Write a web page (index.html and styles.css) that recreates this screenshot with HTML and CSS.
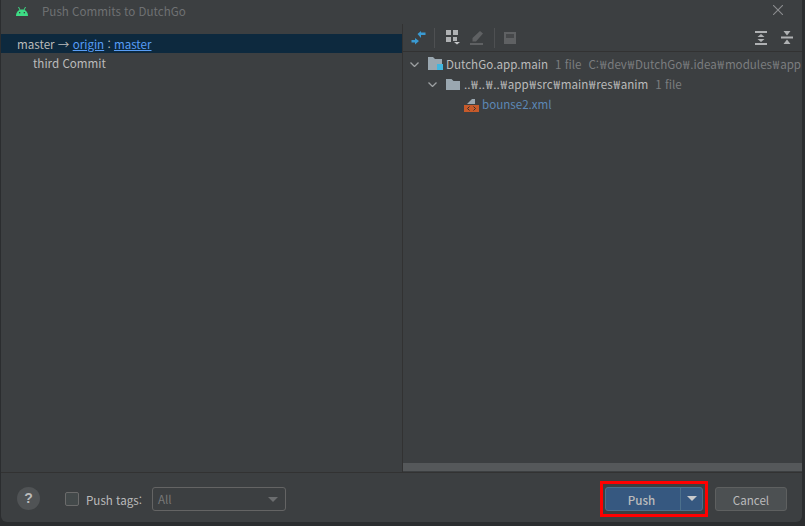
FILE: index.html
```
<!DOCTYPE html>
<html lang="ko">
<head>
<meta charset="utf-8">
<title>Push Commits to DutchGo</title>
<link rel="stylesheet" href="styles.css">
</head>
<body>
<div class="window">
  <header class="titlebar">
    <svg class="android" width="12" height="9" viewBox="0 0 12 9"><path fill="#3ddc84" d="M0 9C0 5 2.500 2.500 6 2.500S12 5 12 9z"/><path stroke="#3ddc84" stroke-width="1" d="M2.500 0l1.500 3M9.500 0L8 3"/><rect x="3" y="5" width="1.300" height="1.300" fill="#3c3f41"/><rect x="7.700" y="5" width="1.300" height="1.300" fill="#3c3f41"/></svg>
    <span class="title">Push Commits to DutchGo</span>
    <svg class="close" width="10" height="10" viewBox="0 0 10 10"><path stroke="#8a8c8e" stroke-width="1.100" fill="none" d="M0 0l10 10M10 0L0 10"/></svg>
  </header>
  <main class="split">
    <section class="left">
      <div class="branch"><span>master</span> <span class="arrow">→</span> <a>origin</a> <span>:</span> <a>master</a></div>
      <div class="commit">third Commit</div>
    </section>
    <section class="right">
      <div class="toolbar">
        <svg class="t-diff" width="15" height="14" viewBox="0 0 15 14"><path fill="#3a9ad2" d="M10 1.500h4.500V4H10zM10 0v7L6.500 3zM.5 9H4v2.500H.5zM4 7v6.500L8 10z"/></svg>
        <i class="sep"></i>
        <svg class="t-group" width="16" height="15" viewBox="0 0 16 15"><path fill="#afb1b3" d="M1 0h5v5H1zM8 0h5v5H8zM1 7h5v5H1zM8 7h4v4H8z"/><path fill="#c4c6c8" d="M9 12h6l-3 2.500z"/></svg>
        <svg class="t-edit" width="14" height="14" viewBox="0 0 14 14"><path fill="#5f6163" d="M10 0l3 2.500L6 10.500H2.500V7zM0 12h13v2H0z"/></svg>
        <i class="sep"></i>
        <svg class="t-save" width="12" height="12" viewBox="0 0 12 12"><path fill="#5f6163" d="M0 0h12v12H0z"/><path fill="#46484a" d="M2 2h8v4H2z"/></svg>
        <span class="spacer"></span>
        <svg width="12" height="14" viewBox="0 0 12 14"><path fill="#afb1b3" d="M0 0h12v2H0zM0 12h12v2H0zM6 3l3.500 3h-7zM6 11L2.500 8h7z"/></svg>
        <svg class="t-last" width="12" height="13" viewBox="0 0 12 13"><path fill="#afb1b3" d="M0 5.500h12v2H0zM6 4.500L2.500 0h7zM6 8.500l3.500 4.500h-7z"/></svg>
      </div>
      <div class="tree">
        <div class="row l0">
          <svg class="chev" width="9" height="5" viewBox="0 0 9 5"><path stroke="#9da0a2" stroke-width="1.300" fill="none" d="M.5.500l4 4 4-4"/></svg>
          <svg class="ico" width="16" height="14" viewBox="0 0 16 14"><path fill="#9aa7b0" d="M0 0h5l2 2h7v5H9v6H0z"/><path fill="#40b6e0" d="M9 7h6v6H9z"/></svg>
          <span>DutchGo.app.main</span><span class="muted">1 file</span><span class="muted">C:<span class="won">₩</span>dev<span class="won">₩</span>DutchGo<span class="won">₩</span>.idea<span class="won">₩</span>modules<span class="won">₩</span>app</span>
        </div>
        <div class="row l1">
          <svg class="chev" width="9" height="5" viewBox="0 0 9 5"><path stroke="#9da0a2" stroke-width="1.300" fill="none" d="M.5.500l4 4 4-4"/></svg>
          <svg class="ico" width="14" height="11" viewBox="0 0 14 11"><path fill="#9aa7b0" d="M0 0h5.500l2 2H14v9H0z"/></svg>
          <span>..<span class="won">₩</span>..<span class="won">₩</span>..<span class="won">₩</span>app<span class="won">₩</span>src<span class="won">₩</span>main<span class="won">₩</span>res<span class="won">₩</span>anim</span><span class="muted">1 file</span>
        </div>
        <div class="row l2">
          <svg class="ico" width="15" height="15" viewBox="0 0 15 15"><path fill="#9aa7b0" d="M3 7l5-5h3v5z"/><path fill="#c75a2a" d="M0 8h15v7H0z"/><path stroke="#2f2f2f" fill="none" d="M5.500 9.500l-2 2 2 2M9.500 9.500l2 2-2 2"/></svg>
          <span class="file">bounse2.xml</span>
        </div>
      </div>
      <div class="scroll"></div>
    </section>
  </main>
  <footer class="footer">
    <button class="help">?</button>
    <label class="tags"><i class="check"></i><span class="tag-text">Push tags:</span></label>
    <div class="select"><span>All</span><i class="caret"></i></div>
    <span class="spacer"></span>
    <div class="hl">
      <div class="push"><span class="push-label">Push</span><span class="push-drop"><i class="caret light"></i></span></div>
    </div>
    <button class="cancel">Cancel</button>
  </footer>
</div>
</body>
</html>
```

FILE: styles.css
```
* { box-sizing: border-box; }
html, body { margin: 0; height: 100%; }
body { background: #2b2d2f; font-family: "Noto Sans CJK KR", "Noto Sans", sans-serif; font-size: 11.6px; color: #bbbbbb; overflow: hidden; }
svg { flex: none; }
.window { width: 801px; height: 522px; margin-left: 1px; background: #3c3f41; border-bottom-left-radius: 6px; border-bottom-right-radius: 6px; display: flex; flex-direction: column; overflow: hidden; }
.titlebar { height: 24px; display: flex; align-items: center; padding: 0 19px 2px 15px; flex: none; }
.title { margin-left: 14px; color: #6f7173; flex: 1; line-height: 16px; }
.close { margin-bottom: 2px; }
.split { height: 449px; flex: none; display: flex; border-bottom: 1px solid #323232; }
.left { width: 402px; flex: none; padding-top: 10px; border-right: 1px solid #323232; }
.branch { height: 19px; background: #0d293e; padding: 1px 0 0 16px; line-height: 19px; white-space: pre-wrap; }
.branch a { color: #589df6; text-decoration: underline; }
.commit { height: 19px; padding: 1px 0 0 32px; line-height: 19px; }
.right { flex: 1; display: flex; flex-direction: column; min-width: 0; }
.toolbar { height: 28px; flex: none; display: flex; align-items: center; padding: 0 9px 0 8px; border-bottom: 1px solid #323232; }
.sep { width: 1px; height: 20px; background: #4e5052; margin: 0 9px 0 8px; }
.spacer { flex: 1; }
.t-group { margin-left: 1px; }
.t-edit { margin: 0 2px 0 9px; }
.t-last { margin-left: 14px; }
.tree { flex: 1; padding-top: 2px; overflow: hidden; }
.row { height: 20px; display: flex; align-items: center; white-space: nowrap; }
.l0 { padding-left: 7px; }
.l1 { padding-left: 25px; }
.l2 { padding-left: 61px; }
.chev { margin-right: 9px; }
.l0 .ico { margin-right: 2px; }
.l1 .ico { margin-right: 4px; }
.l2 .ico { margin-right: 3px; }
.won { margin: 0 .85px; }
.muted { color: #7b7d7f; margin-left: 7px; }
.file { color: #5c87b5; }
.scroll { height: 8px; margin-bottom: 1px; background: #55585a; flex: none; }
.footer { flex: 1; display: flex; align-items: center; padding: 2px 15px 0 16px; }
.help { width: 23px; height: 23px; border-radius: 50%; border: 0; background: #505355; color: #bbbbbb; font: bold 14px/23px "Liberation Sans", sans-serif; padding: 0; }
.tags { display: flex; align-items: center; margin-left: 25px; }
.tag-text { padding-top: 2px; }
.check { width: 14px; height: 14px; border: 1px solid #6b6b6b; border-radius: 2px; background: #43494a; margin-right: 7px; }
.select { width: 134px; height: 24px; margin-left: 10px; border: 1px solid #646464; border-radius: 3px; display: flex; align-items: center; justify-content: space-between; padding: 1px 5px 0; color: #777777; }
.caret { width: 0; height: 0; border: 5px solid transparent; border-top: 5px solid #6b6d6f; border-bottom: 0; margin-right: 2px; }
.caret.light { border-top-color: #c8cacc; margin: 0; }
.hl { border: 3px solid #f00; padding: 3px 2px; margin-right: 7px; }
.push { width: 98px; height: 24px; display: flex; background: #365880; border: 1px solid #4c708c; border-radius: 3px; color: #bbbbbb; }
.push-label { flex: 1; text-align: center; line-height: 24px; font-weight: 500; padding-right: 3px; }
.push-drop { width: 22px; border-left: 1px solid #4c708c; display: flex; align-items: center; justify-content: center; }
.cancel { width: 72px; height: 24px; background: #4c5052; border: 1px solid #5e6060; border-radius: 3px; color: #bbbbbb; font: inherit; padding: 2px 0 0; }
```
